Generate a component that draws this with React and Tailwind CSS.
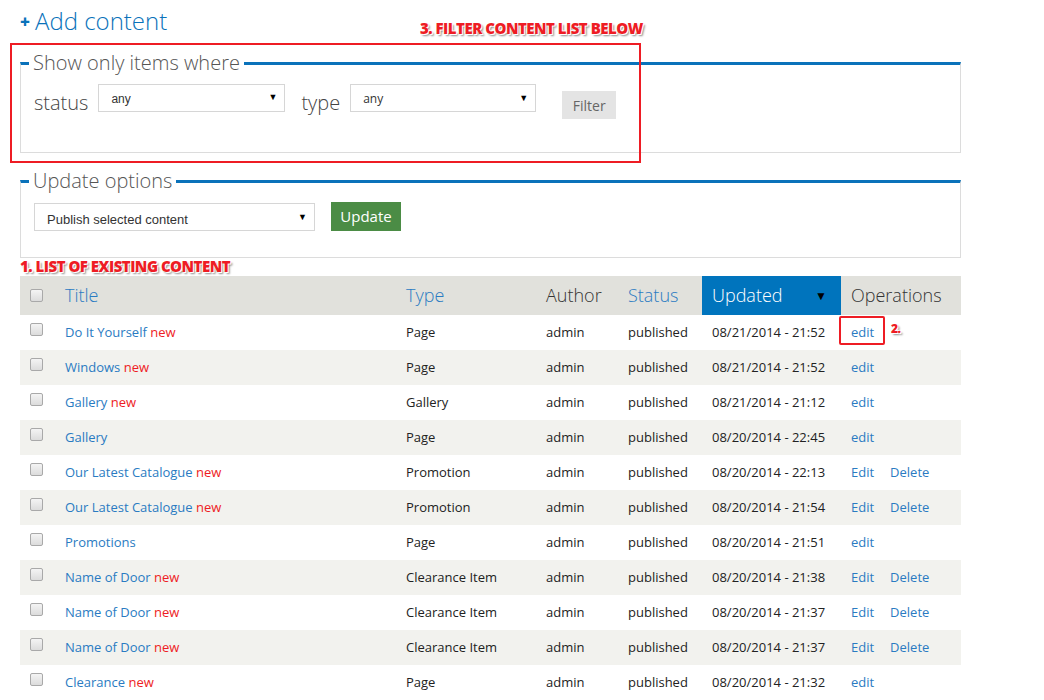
// App.jsx – content admin list with annotation overlays
const ROWS = [
  { title: 'Do It Yourself', isNew: true, type: 'Page', updated: '08/21/2014 - 21:52', ops: 'edit', marked: true },
  { title: 'Windows', isNew: true, type: 'Page', updated: '08/21/2014 - 21:52', ops: 'edit' },
  { title: 'Gallery', isNew: true, type: 'Gallery', updated: '08/21/2014 - 21:12', ops: 'edit' },
  { title: 'Gallery', isNew: false, type: 'Page', updated: '08/20/2014 - 22:45', ops: 'edit' },
  { title: 'Our Latest Catalogue', isNew: true, type: 'Promotion', updated: '08/20/2014 - 22:13', ops: 'full' },
  { title: 'Our Latest Catalogue', isNew: true, type: 'Promotion', updated: '08/20/2014 - 21:54', ops: 'full' },
  { title: 'Promotions', isNew: false, type: 'Page', updated: '08/20/2014 - 21:51', ops: 'edit' },
  { title: 'Name of Door', isNew: true, type: 'Clearance Item', updated: '08/20/2014 - 21:38', ops: 'full' },
  { title: 'Name of Door', isNew: true, type: 'Clearance Item', updated: '08/20/2014 - 21:37', ops: 'full' },
  { title: 'Name of Door', isNew: true, type: 'Clearance Item', updated: '08/20/2014 - 21:37', ops: 'full' },
  { title: 'Clearance', isNew: true, type: 'Page', updated: '08/20/2014 - 21:32', ops: 'edit' },
];

const noteText =
  "font-['Open_Sans',sans-serif] font-extrabold text-[#ee1c24] tracking-[-0.5px] [text-shadow:1px_1px_0_#fff,-1px_-1px_0_#fff,2px_2px_2px_rgba(0,0,0,0.45)]";

function Checkbox() {
  return (
    <div className="w-[13px] h-[13px] rounded-[2px] border border-[#a9a9a9] bg-gradient-to-b from-[#f4f4f4] to-[#dcdcdc]" />
  );
}

function FakeSelect({ value, width, arial = true }) {
  return (
    <div
      className={`relative h-[28px] border border-[#d6d6d6] bg-white pl-[12px] pt-[5px] text-[12px] text-[#333] ${
        arial ? "font-['Liberation_Sans',sans-serif]" : ''
      }`}
      style={{ width }}
    >
      {value}
      <span className="absolute right-[7px] top-[6px] text-[9px] text-black">▼</span>
    </div>
  );
}

function Fieldset({ legend, children, className = '' }) {
  return (
    <fieldset
      className={`ml-[20px] w-[941px] border-x border-b border-[#dcdcdc] border-t-[3px] border-t-[#0a72ba] px-[8px] ${className}`}
    >
      <legend className="px-[4px] text-[20px] font-light leading-[26px] text-[#555]">{legend}</legend>
      {children}
    </fieldset>
  );
}

export default function App() {
  return (
    <div className="relative w-[1044px] h-[700px] overflow-hidden bg-white font-['Open_Sans',sans-serif] text-[#222]">
      {/* Title */}
      <div className="flex items-center pl-[20px] pt-[1px] h-[40px]">
        <span className="text-[17px] font-extrabold text-[#0a72ba] leading-none mr-[5px] mt-[1px]">+</span>
        <span className="text-[24px] font-light leading-[32px] text-[#0a72ba]">Add content</span>
      </div>

      {/* Filter */}
      <Fieldset legend="Show only items where" className="mt-[10px] h-[103px]">
        <div className="flex items-start pl-[5px] pt-[8px]">
          <span className="text-[20px] font-light text-[#444] leading-[28px] mt-[5px]">status</span>
          <div className="ml-[10px]">
            <FakeSelect value="any" width={187} />
          </div>
          <span className="ml-[16px] text-[20px] font-light text-[#444] leading-[28px] mt-[5px]">type</span>
          <div className="ml-[10px]">
            <FakeSelect value="any" width={186} arial={false} />
          </div>
          <button className="ml-[26px] mt-[7px] h-[28px] w-[54px] bg-[#e4e4e4] text-[14px] text-[#666]">Filter</button>
        </div>
      </Fieldset>

      {/* Update options */}
      <Fieldset legend="Update options" className="mt-[15px] h-[90px]">
        <div className="flex items-start pl-[5px] pt-[9px]">
          <div className="relative h-[28px] w-[281px] border border-[#d6d6d6] bg-white pl-[12px] pt-[6px] font-['Liberation_Sans',sans-serif] text-[13px] text-[#333]">
            Publish selected content
            <span className="absolute right-[7px] top-[7px] text-[9px] text-black">▼</span>
          </div>
          <button className="ml-[16px] -mt-[1px] h-[29px] w-[70px] bg-[#4b8c45] text-[15px] text-white">Update</button>
        </div>
      </Fieldset>

      {/* Table */}
      <div className="mx-[20px] mt-[18px] w-[941px]">
        <div className="flex h-[39px] items-center bg-[#e1e1dc] text-[18px] font-light">
          <div className="w-[45px] pl-[10px]">
            <Checkbox />
          </div>
          <div className="w-[341px] text-[#2a7bc2]">Title</div>
          <div className="w-[140px] text-[#2a7bc2]">Type</div>
          <div className="w-[82px] text-[#333]">Author</div>
          <div className="w-[74px] text-[#2a7bc2]">Status</div>
          <div className="flex h-full w-[139px] items-center justify-between bg-[#0074bd] pl-[10px] pr-[14px] text-white">
            <span>Updated</span>
            <span className="text-[12px] text-black">▼</span>
          </div>
          <div className="pl-[10px] text-[#333]">Operations</div>
        </div>

        {ROWS.map((r, i) => (
          <div
            key={i}
            className={`flex h-[35px] items-center text-[13px] ${i % 2 === 1 ? 'bg-[#f2f2ee]' : 'bg-white'}`}
          >
            <div className="w-[45px] pl-[10px] -mt-[6px]">
              <Checkbox />
            </div>
            <div className="w-[341px]">
              <span className="text-[#2a7bc2]">{r.title}</span>
              {r.isNew && <span className="text-[#ee1c24]"> new</span>}
            </div>
            <div className="w-[140px]">{r.type}</div>
            <div className="w-[82px]">admin</div>
            <div className="w-[74px]">published</div>
            <div className="w-[139px] pl-[10px]">{r.updated}</div>
            <div className="relative flex gap-[16px] pl-[10px] text-[#2a7bc2]">
              {r.ops === 'edit' ? <span>edit</span> : (<><span>Edit</span><span>Delete</span></>)}
              {r.marked && (
                <>
                  <div className="absolute -left-[2px] -top-[7px] h-[29px] w-[46px] rounded-[2px] border-2 border-[#ee1c24]" />
                  <span className={`absolute left-[50px] -top-[3px] text-[12px] ${noteText}`}>2.</span>
                </>
              )}
            </div>
          </div>
        ))}
      </div>

      {/* Annotations */}
      <div className="absolute left-[10px] top-[43px] h-[120px] w-[631px] border-2 border-[#ee1c24]" />
      <div className={`absolute left-[420px] top-[18px] text-[15px] leading-[20px] ${noteText}`}>
        3. FILTER CONTENT LIST BELOW
      </div>
      <div className={`absolute left-[20px] top-[256px] text-[15px] leading-[20px] ${noteText}`}>
        1. LIST OF EXISTING CONTENT
      </div>
    </div>
  );
}
